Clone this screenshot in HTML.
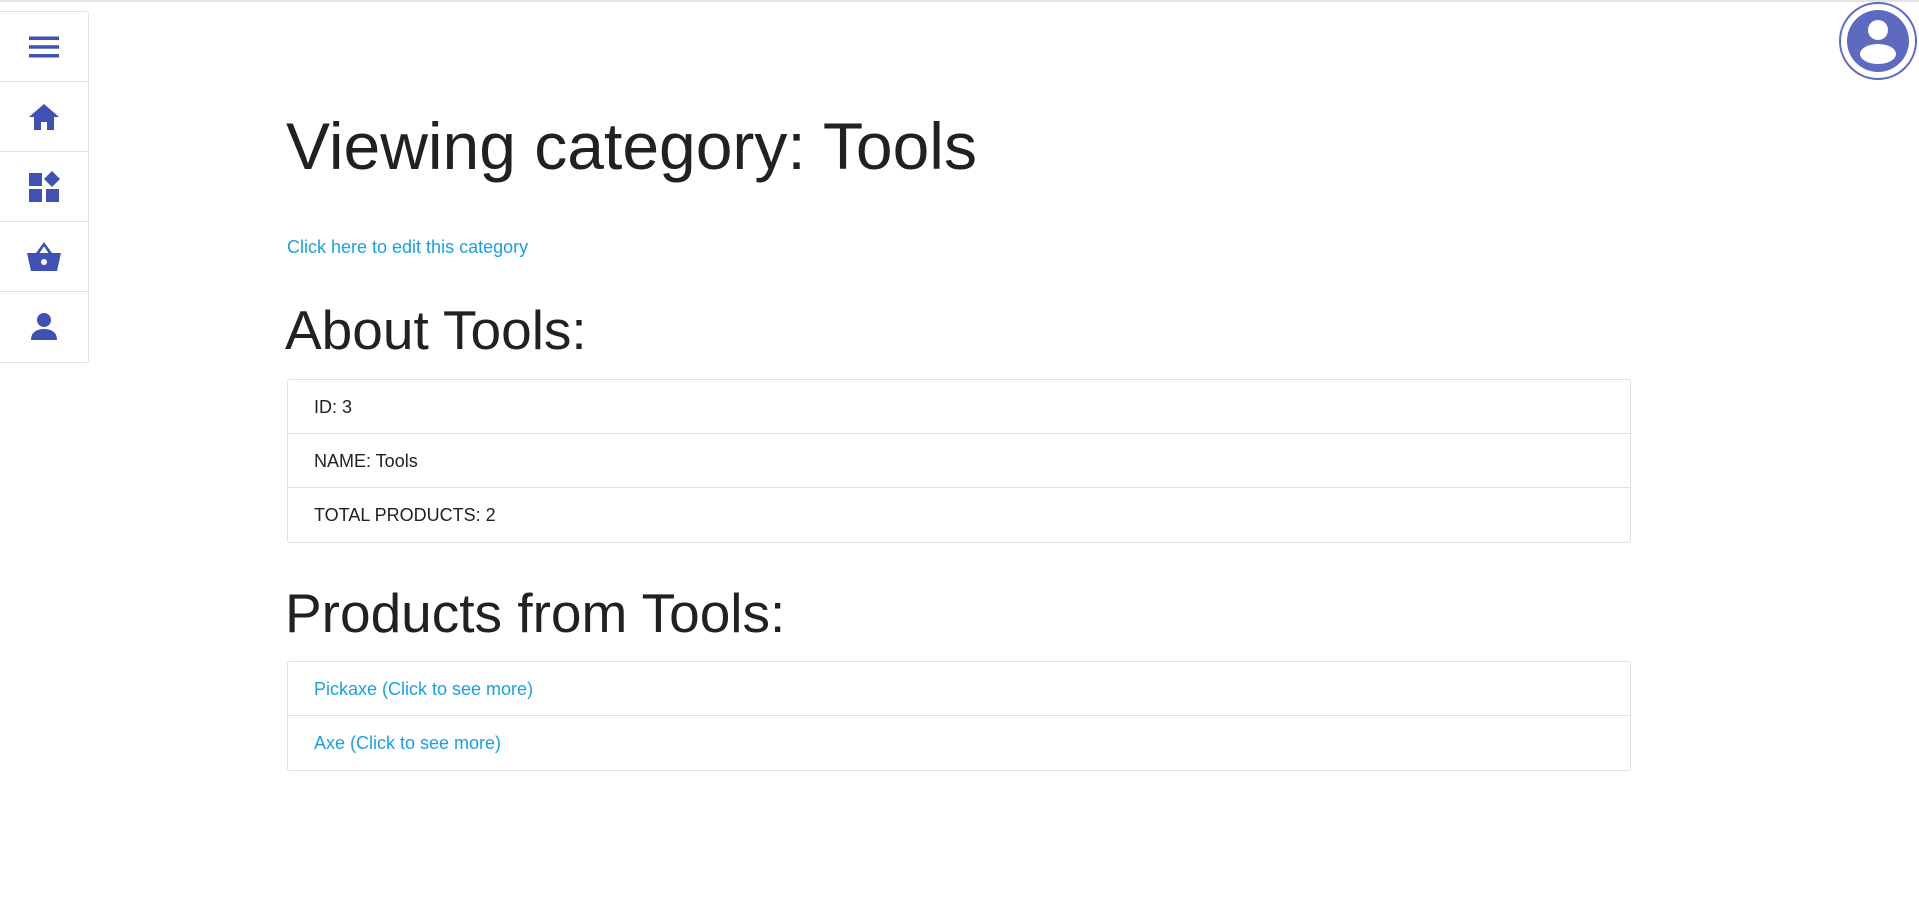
<!DOCTYPE html>
<html><head><meta charset="utf-8"><style>
*{box-sizing:border-box;margin:0;padding:0}
body{width:1919px;height:899px;background:#fff;font-family:"Liberation Sans",sans-serif;color:#212121;position:relative;overflow:hidden}
.top{position:absolute;left:0;top:0;width:1919px;height:2px;background:#e4e4e4}
.side{position:absolute;left:0;top:11px;width:89px;border:1px solid #e0e0e0;border-left:none;border-radius:0 3px 3px 0}
.side div{height:70px;border-bottom:1px solid #e0e0e0;display:flex;align-items:center;justify-content:center}
.side div:last-child{border-bottom:none}
h1{position:absolute;left:286px;top:106px;font-size:66px;font-weight:normal;line-height:80px}
h2{position:absolute;left:285px;font-size:55px;font-weight:normal;line-height:64px}
a{color:#1a9fe6;text-decoration:none}
.link{position:absolute;left:287px;top:237px;font-size:18px}
.box{position:absolute;left:287px;width:1344px;border:1px solid #e0e0e0;border-radius:3px}
.box div{height:54px;border-bottom:1px solid #e0e0e0;padding-left:26px;font-size:18px;line-height:55px}
.box div:last-child{border-bottom:none}
</style></head><body>
<div class="top"></div>
<div class="side">
<div><svg width="30" height="24" viewBox="0 0 30 24"><rect x="0" y="1.5" width="30" height="3.5" fill="#3f51b5"/><rect x="0" y="10.2" width="30" height="3.5" fill="#3f51b5"/><rect x="0" y="19" width="30" height="3.5" fill="#3f51b5"/></svg></div>
<div><svg width="32" height="28" viewBox="0 0 32 28"><path d="M16 1L1 14h5v13h7v-8h6v8h7V14h5z" fill="#3f51b5"/></svg></div>
<div><svg width="32" height="32" viewBox="0 0 32 32"><rect x="1" y="2" width="13" height="13" fill="#3f51b5"/><rect x="1" y="18" width="13" height="13" fill="#3f51b5"/><rect x="18" y="18" width="13" height="13" fill="#3f51b5"/><path d="M24 0l8 8-8 8-8-8z" fill="#3f51b5"/></svg></div>
<div><svg width="36" height="32" viewBox="0 0 36 32"><path d="M18 1L10 12h3.5l4.5-6.5 4.5 6.5h3.5z" fill="#3f51b5"/><path d="M1 12h34l-4 18H5z" fill="#3f51b5"/><circle cx="18" cy="21" r="3" fill="#fff"/></svg></div>
<div><svg width="32" height="30" viewBox="0 0 32 30"><circle cx="16" cy="8" r="7" fill="#3f51b5"/><path d="M3 28c0-8 6-11 13-11s13 3 13 11z" fill="#3f51b5"/></svg></div>
</div>
<svg style="position:absolute;left:1838px;top:1px" width="80" height="80" viewBox="0 0 80 80"><circle cx="40" cy="40" r="38" fill="none" stroke="#5c6bc0" stroke-width="2"/><circle cx="40" cy="40" r="31" fill="#5c6bc0"/><circle cx="40" cy="29" r="10" fill="#fff"/><ellipse cx="40" cy="53" rx="18" ry="10" fill="#fff"/></svg>
<h1>Viewing category: Tools</h1>
<a class="link" href="#">Click here to edit this category</a>
<h2 style="top:298px">About Tools:</h2>
<div class="box" style="top:379px"><div>ID: 3</div><div>NAME: Tools</div><div>TOTAL PRODUCTS: 2</div></div>
<h2 style="top:581px">Products from Tools:</h2>
<div class="box" style="top:661px"><div><a href="#">Pickaxe (Click to see more)</a></div><div><a href="#">Axe (Click to see more)</a></div></div>
</body></html>
